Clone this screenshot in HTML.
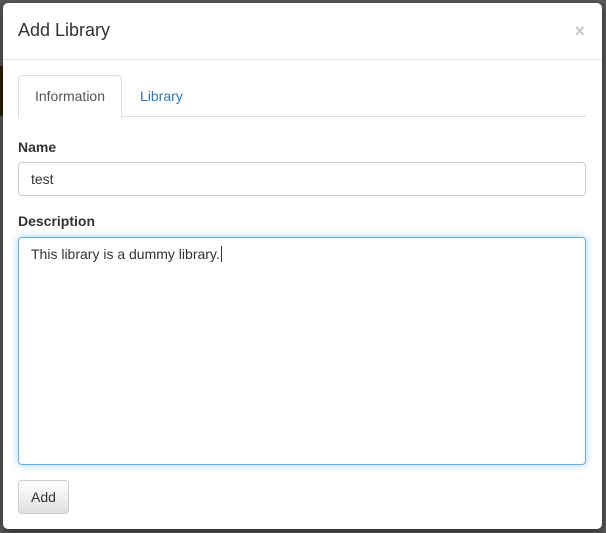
<!DOCTYPE html>
<html><head><style>
body{margin:0;width:606px;height:533px;background:#585858;font-family:"Liberation Sans",sans-serif;font-size:14px;color:#333;position:relative;overflow:hidden}
.bg1{position:absolute;left:0;top:66px;width:3px;height:50px;background:#2a2000}
.modal{position:absolute;left:3px;top:3px;width:599px;height:526px;background:#fff;border-radius:5px;box-shadow:0 3px 9px rgba(0,0,0,.5)}
.title{position:absolute;left:15px;top:17px;font-size:18px;color:#333}
.close{position:absolute;right:17px;top:18px;font-size:18px;font-weight:bold;color:#c8c8c8}
.hr{position:absolute;left:0;right:0;top:56px;border-top:1px solid #e5e5e5}
.tabline{position:absolute;left:15px;width:568px;top:113px;border-top:1px solid #ddd}
.tab{position:absolute;left:15px;top:72px;width:102px;height:42px;border:1px solid #ddd;border-bottom:none;border-radius:4px 4px 0 0;background:#fff;text-align:center;line-height:40px;color:#555}
.tab2{position:absolute;left:137px;top:72px;line-height:42px;color:#337ab7}
.lbl{position:absolute;left:15px;font-weight:bold}
.in{position:absolute;left:15px;width:568px;border:1px solid #ccc;border-radius:4px;box-sizing:border-box}
.btn{position:absolute;left:15px;top:477px;width:51px;height:34px;box-sizing:border-box;border:1px solid #ccc;border-radius:4px;background:linear-gradient(#fff,#e0e0e0);text-align:center;line-height:32px}
</style></head><body>
<div class="bg1"></div>
<div class="modal">
<div class="title">Add Library</div>
<div class="close">×</div>
<div class="hr"></div>
<div class="tabline"></div>
<div class="tab">Information</div>
<div class="tab2">Library</div>
<div class="lbl" style="top:136px">Name</div>
<div class="in" style="top:159px;height:34px;padding:8px 12px">test</div>
<div class="lbl" style="top:210px">Description</div>
<div class="in" style="top:234px;height:228px;padding:8px 12px;border-color:#66afe9;box-shadow:0 0 8px rgba(102,175,233,.6)">This library is a dummy library.<span style="border-left:1px solid #333;margin-left:1px"></span></div>
<div class="btn">Add</div>
</div>
</body></html>
